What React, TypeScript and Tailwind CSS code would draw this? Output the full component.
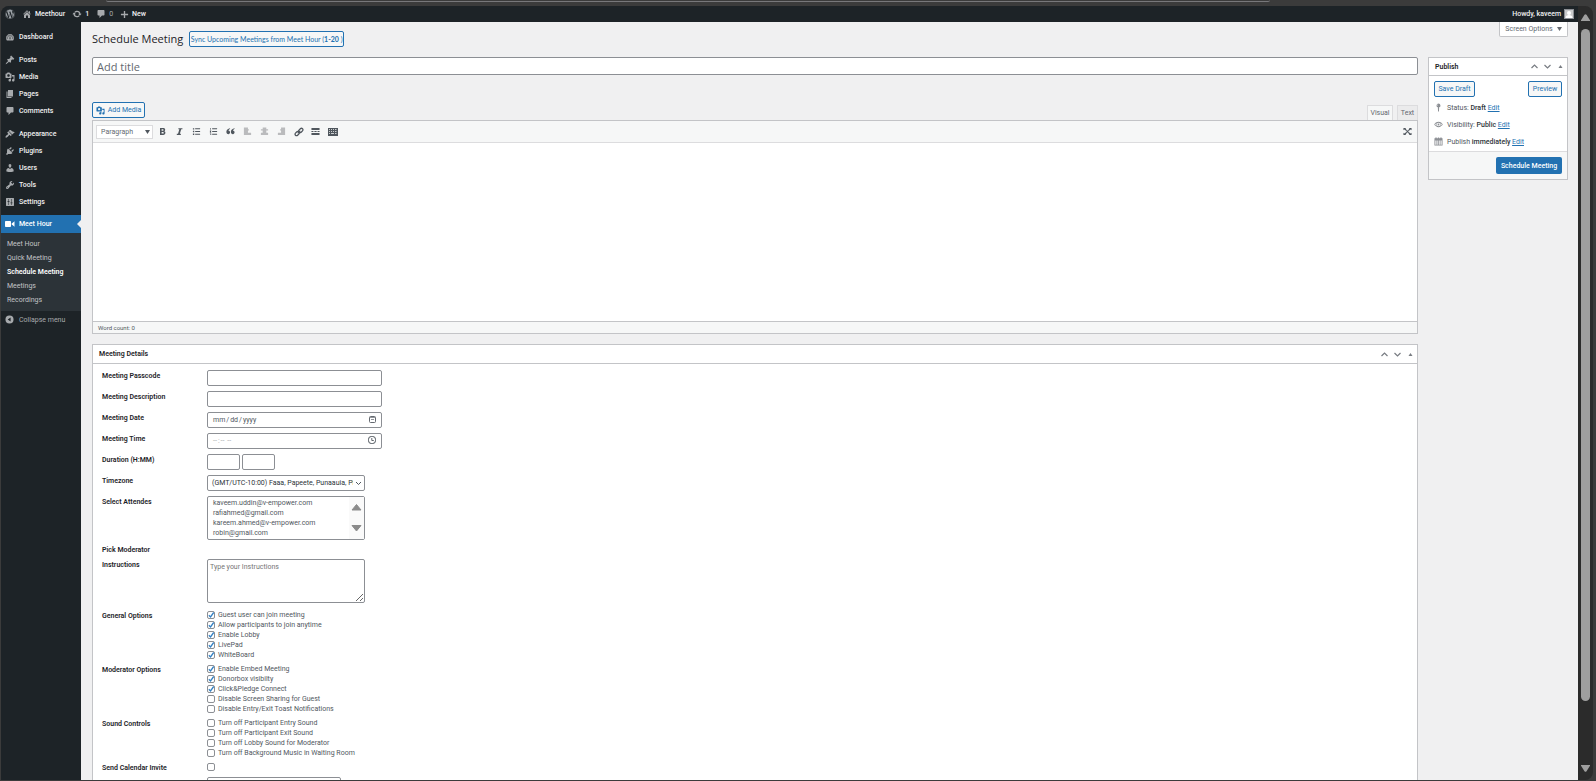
import React from "react";
import { FaWordpress } from "react-icons/fa6";

const paths = {
  home: "M16 8.5l1.53 1.53-1.06 1.06L10 4.6l-6.47 6.49-1.06-1.06L10 2.5l4 4v-2h2v4zm-6-2.46l6 5.99V18H12v-5H8v5H4v-5.97z",
  update:
    "M10.2 3.28c3.53 0 6.43 2.61 6.92 6h2.08l-3.5 4-3.5-4h2.32c-.45-1.97-2.21-3.45-4.32-3.45-1.45 0-2.73.71-3.54 1.78L4.95 5.66C6.23 4.2 8.11 3.28 10.2 3.28zm-.4 13.44c-3.52 0-6.43-2.61-6.92-6H.8l3.5-4c1.17 1.33 2.33 2.67 3.5 4H5.48c.45 1.97 2.21 3.45 4.32 3.45 1.45 0 2.73-.71 3.54-1.78l1.71 1.95c-1.28 1.46-3.15 2.38-5.25 2.38z",
  comments: "M5 2h10c1.1 0 2 .9 2 2v7c0 1.1-.9 2-2 2h-3l-5 5v-5H5c-1.1 0-2-.9-2-2V4c0-1.1.9-2 2-2z",
  plus: "M18 8.500v3h-6.500v6.500h-3v-6.500H2v-3h6.500V2h3v6.500z",
  dashboard:
    "M3.76 17h12.48A7.97 7.970 0 0 0 18 12c0-4.420-3.580-8-8-8s-8 3.580-8 8c0 1.890.660 3.630 1.760 5zM9 5.500h2v2H9zM5.200 7h2v2h-2zM12.800 7h2v2h-2zM3.500 11h2v2h-2zM14.500 11h2v2h-2zM9 14.500l.6-6h.8l.6 6z",
  posts:
    "M10.44 3.02l1.82-1.82 6.36 6.35-1.83 1.82c-1.05-.68-2.48-.57-3.41.36l-.75.75c-.92.93-1.04 2.35-.35 3.41l-1.83 1.82-2.41-2.41-2.8 2.79c-.42.42-3.38 2.71-3.8 2.29s1.86-3.39 2.28-3.81l2.79-2.79L4.1 9.36l1.83-1.82c1.05.69 2.48.57 3.4-.36l.75-.75c.93-.92 1.05-2.35.36-3.41z",
  media:
    "M13 11V4c0-.55-.45-1-1-1h-1.67L9 1H5L3.67 3H2c-.55 0-1 .45-1 1v7c0 .55.45 1 1 1h10c.55 0 1-.45 1-1zM7 4.5c1.38 0 2.5 1.12 2.5 2.5S8.38 9.5 7 9.5 4.5 8.38 4.5 7 5.62 4.5 7 4.5zM14 6h5v10.5c0 1.38-1.12 2.5-2.5 2.5S14 17.88 14 16.5s1.12-2.5 2.5-2.5c.17 0 .34.02.5.05V9h-3V6zm-4 8.05V13h2v3.5c0 1.38-1.12 2.5-2.5 2.5S7 17.88 7 16.5 8.12 14 9.5 14c.17 0 .34.02.5.05z",
  pages: "M6 15V2h10v13H6zm-1 1h8v2H3V5h2v11z",
  appearance:
    "M14.48 11.06L7.41 3.99l1.5-1.5c.5-.56 2.3-.47 3.51.32 1.21.8 1.43 1.28 2.91 2.1 1.18.64 2.45 1.26 4.45.85zm-.71.71L6.7 4.7 4.93 6.47c-.39.39-.39 1.02 0 1.41l1.06 1.06c.39.39.39 1.03 0 1.42-.6.6-1.43 1.11-2.21 1.69-.35.26-.7.53-1.01.84C1.43 14.23.4 16.08 1.4 17.07c.99 1 2.84-.03 4.18-1.36.31-.31.58-.66.85-1.02.57-.78 1.08-1.61 1.69-2.21.39-.39 1.02-.39 1.41 0l1.06 1.06c.39.39 1.02.39 1.41 0z",
  plugins:
    "M13.11 4.36L9.87 7.6 8 5.73l3.24-3.24c.35-.34 1.05-.2 1.56.32.52.51.66 1.21.31 1.55zm-8 1.77l.91-1.12 9.01 9.01-1.19.84c-.71.71-2.63 1.16-3.82 1.16H6.14L4.9 17.26c-.59.59-1.54.59-2.12 0-.59-.58-.59-1.53 0-2.12l1.24-1.24v-3.88c0-1.13.4-3.19 1.09-3.89zm7.26 3.97l3.24-3.24c.34-.35 1.04-.21 1.55.31.52.51.66 1.21.31 1.55l-3.24 3.25z",
  users:
    "M10 9.25c-2.27 0-2.73-3.44-2.73-3.44C7 4.02 7.82 2 9.97 2c2.16 0 2.98 2.02 2.71 3.81 0 0-.41 3.44-2.68 3.44zm0 2.57L12.72 10c2.39 0 4.52 2.33 4.52 4.53v2.49s-3.65 1.13-7.24 1.13c-3.65 0-7.24-1.13-7.24-1.13v-2.49c0-2.25 1.94-4.48 4.47-4.48z",
  tools:
    "M16.68 9.77c-1.34 1.34-3.3 1.67-4.95.99l-5.41 6.52c-.99.99-2.59.99-3.58 0s-.99-2.59 0-3.57l6.52-5.42c-.68-1.65-.35-3.61.99-4.95 1.28-1.28 3.12-1.62 4.72-1.06l-2.89 2.89 2.82 2.82 2.86-2.87c.53 1.58.18 3.39-1.08 4.65zM3.81 16.21c.4.39 1.04.39 1.43 0 .4-.4.4-1.04 0-1.43-.39-.4-1.03-.4-1.43 0-.39.39-.39 1.03 0 1.43z",
  settings:
    "M3 2h14c.6 0 1 .4 1 1v14c0 .6-.4 1-1 1H3c-.6 0-1-.4-1-1V3c0-.6.4-1 1-1zM6.500 4v4H5v1.500h1.500V16h1V9.500H9V8H7.500V4zM12.500 4v7H11v1.500h1.500V16h1v-3.500H15V11h-1.500V4z",
  video: "M12 14V6c0-1.1-.9-2-2-2H2C.9 4 0 4.900 0 6v8c0 1.100.9 2 2 2h8c1.100 0 2-.9 2-2zm1-3.300l6 4.800V4.500l-6 4.800v1.400z",
  collapse: "M10 1a9 9 0 1 0 0 18 9 9 0 0 0 0-18zM12.500 5.500v9L6 10z",
  bold: "M4.500 2h6.800c3 0 4.700 1.400 4.700 3.900 0 1.600-.8 2.700-2.100 3.300 1.700.5 2.600 1.800 2.600 3.700 0 2.900-1.900 4.600-5 4.600h-7zM8 5v3.300h2.500c1.300 0 2-.5 2-1.600S11.800 5 10.500 5zM8 11v3.700h2.800c1.400 0 2.200-.6 2.200-1.900S12.200 11 10.800 11z",
  italic: "M7.500 2.500H16.500V5h-2.700l-3 10H13v2.500H4V15h2.700l3-10H7.500z",
  ul: "M2 2.500h3v3H2zM7 3h11v2H7zM2 8.500h3v3H2zM7 9h11v2H7zM2 14.500h3v3H2zM7 15h11v2H7z",
  ol: "M3 2h1.500v4H3zM7 3h11v2H7zM2 8h3v1.500L3.500 11.500H5v1H2zM7 9h11v2H7zM2 14.500h3V18H2v-1h2v-.5H3v-1h1H2zM7 15h11v2H7z",
  quote: "M9 4.500C6.800 5.300 5.700 6.800 5.600 8.500c2 0 3.400 1.300 3.400 3.300S7.500 16 5.400 16C2.500 16 .8 13.700.8 10.700.8 7 4.200 4 9 3zM19 4.500c-2.200.8-3.300 2.300-3.400 4 2 0 3.400 1.300 3.400 3.300S17.500 16 15.400 16c-2.900 0-4.600-2.300-4.600-5.300C10.800 7 14.200 4 19 3z",
  left: "M2 1h9v4H2zM2 5h11v3H2zM2 8h9v5H2zM2 13h16v4.500H2z",
  center: "M6 1h8v4H6zM2 5h16v3H2zM6 8h8v5H6zM2 13h16v4.500H2z",
  right: "M9 1h9v4H9zM7 5h11v3H7zM9 8h9v5H9zM2 13h16v4.500H2z",
  more: "M1 2h18v4.500H1zM1 9h4.500v2H1zM7.500 9h5v2h-5zM14.500 9H19v2h-4.500zM1 13.500h18V18H1z",
  keyboard:
    "M0 2h20v16H0zM2 4.500v1.500h2V4.500zM6 4.500v1.500h2V4.500zM10 4.500v1.500h2V4.500zM14 4.500v1.500h3V4.500zM2 8.500V10h2V8.500zM6 8.500V10h2V8.500zM10 8.500V10h2V8.500zM14 8.500V10h3V8.500zM2 12.500V14h2v-1.500zM6 12.500V14h6v-1.500zM14 12.500V14h3v-1.500z",
  expand: "M1 2h6L5.500 3.500 9 7.500 7.500 9 3 5.500 1 7zM19 2v5l-2-1.500L12.500 9 11 7.500l3.500-4L13 2zM1 18v-5l2 1.500L7.500 11 9 12.500l-3.500 4L7 18zM19 18h-6l1.500-1.500-3.500-4 1.500-1.500 4.500 3.500 2-1.500zM8 8h4v4H8z",
  pin: "M10 1a4.500 4.500 0 0 0-1.500 8.700L9 19h2l.5-9.300A4.500 4.500 0 0 0 10 1zM9 3.500a2 2 0 0 0-2 2h1.200A1 1 0 0 1 9 4.500z",
  eye: "M10 4C5.500 4 2 7 .5 10.200 2.500 13.500 6 16 10 16s7.500-2.500 9.500-5.800C18 7 14.500 4 10 4zM10 6a4 4 0 1 1 0 8 4 4 0 0 1 0-8zM6 7a6 6 0 0 0 0 6.500C4.500 12.700 3.300 11.500 2.500 10.200 3.300 8.800 4.500 7.700 6 7zM14 7c1.500.7 2.700 1.800 3.500 3.200-.8 1.300-2 2.500-3.500 3.300A6 6 0 0 0 14 7zM10 8a2 2 0 1 0 0 4 2 2 0 0 0 0-4z",
  calendar: "M3 1h3v2h2.500V1h3v2H14V1h3v2h2v16H1V3h2zM3 7.500v9.500h2.500V7.500zM7.500 7.500v9.500h1.800V7.500zM11 7.500v9.500h1.700V7.500zM14.500 7.500v9.500H17V7.500z",
};
type IconName = keyof typeof paths;

function Icon({ name, className = "size-[10px]" }: { name: IconName; className?: string }) {
  return (
    <svg viewBox="0 0 20 20" fill="currentColor" fillRule="evenodd" aria-hidden="true" className={`shrink-0 ${className}`}>
      <path d={paths[name]} />
    </svg>
  );
}

const menu: { label: string; icon: IconName }[][] = [
  [{ label: "Dashboard", icon: "dashboard" }],
  [
    { label: "Posts", icon: "posts" },
    { label: "Media", icon: "media" },
    { label: "Pages", icon: "pages" },
    { label: "Comments", icon: "comments" },
  ],
  [
    { label: "Appearance", icon: "appearance" },
    { label: "Plugins", icon: "plugins" },
    { label: "Users", icon: "users" },
    { label: "Tools", icon: "tools" },
    { label: "Settings", icon: "settings" },
  ],
];

function AdminBar() {
  return (
    <header className="flex h-4 shrink-0 items-center justify-between bg-[#1d2327] px-1 font-medium text-[#f0f0f1]">
      <nav className="flex items-center gap-[7px]">
        <a href="#wp" aria-label="WordPress" className="text-[#9ca2a7]">
          <FaWordpress className="size-[10px]" />
        </a>
        <a href="#site" className="flex items-center gap-[3px]">
          <Icon name="home" className="size-[10px] text-[#a7aaad]" />
          Meethour
        </a>
        <a href="#updates" className="flex items-center gap-[3px]">
          <Icon name="update" className="size-[10px] text-[#a7aaad]" />1
        </a>
        <a href="#comments" className="flex items-center gap-[3px] font-normal text-[#a7aaad]">
          <Icon name="comments" />0
        </a>
        <a href="#new" className="flex items-center gap-[3px]">
          <Icon name="plus" className="size-[9px] text-[#a7aaad]" />
          New
        </a>
      </nav>
      <a href="#profile" className="flex items-center gap-[3px]">
        Howdy, kaveem
        <svg viewBox="0 0 10 10" className="size-[10px]" aria-hidden="true">
          <rect width="10" height="10" fill="#8c8f94" />
          <rect x="1" y="1" width="8" height="8" fill="#c9cacb" />
          <circle cx="5" cy="4" r="2" fill="#fff" />
          <path d="M1.500 9C1.500 7 3 6 5 6s3.500 1 3.500 3z" fill="#fff" />
        </svg>
      </a>
    </header>
  );
}

function Sidebar() {
  const sub = ["Meet Hour", "Quick Meeting", "Schedule Meeting", "Meetings", "Recordings"];
  return (
    <nav className="w-20 shrink-0 bg-[#1d2327] pt-[6px] text-[#f0f0f1]">
      {menu.map((group, i) => (
        <ul key={i} className="mb-[6px] font-medium last-of-type:mb-[5px] nth-[3]:mb-[5px]">
          {group.map((m) => (
            <li key={m.label}>
              <a href={"#" + m.label.toLowerCase()} className="flex h-[17px] items-center gap-1 pl-1">
                <Icon name={m.icon} className="size-[10px] text-[#a7aaad]" />
                {m.label}
              </a>
            </li>
          ))}
        </ul>
      ))}
      <a href="#meet-hour" className="relative flex h-[18px] items-center gap-1 bg-[#2271b1] pl-1 font-medium text-white">
        <Icon name="video" />
        Meet Hour
        <svg viewBox="0 0 4 8" className="absolute top-[5px] right-0 h-2 w-1" aria-hidden="true">
          <path d="M4 0v8L0 4z" fill="#f0f0f1" />
        </svg>
      </a>
      <ul className="bg-[#2c3338] pt-1 pb-1 text-[#c3c4c7]">
        {sub.map((s) => (
          <li key={s}>
            <a
              href={"#sub-" + s.toLowerCase().replace(" ", "-")}
              className={s === "Schedule Meeting" ? "flex h-[14px] items-center pl-[6px] font-semibold text-white" : "flex h-[14px] items-center pl-[6px]"}
            >
              {s}
            </a>
          </li>
        ))}
      </ul>
      <button type="button" className="flex h-[17px] items-center gap-[5px] pl-1 text-[#a7aaad]">
        <Icon name="collapse" className="size-[9px]" />
        Collapse menu
      </button>
    </nav>
  );
}

function BoxHandles() {
  return (
    <span className="flex items-center gap-1 text-[#787c82]">
      <button type="button" aria-label="Move up" className="grid size-[9px] place-items-center">
        <svg viewBox="0 0 9 9" className="size-[9px]" fill="none" stroke="currentColor" strokeWidth="1.200">
          <path d="M1.500 6l3-3 3 3" />
        </svg>
      </button>
      <button type="button" aria-label="Move down" className="grid size-[9px] place-items-center">
        <svg viewBox="0 0 9 9" className="size-[9px]" fill="none" stroke="currentColor" strokeWidth="1.200">
          <path d="M1.500 3l3 3 3-3" />
        </svg>
      </button>
      <button type="button" aria-label="Toggle panel" className="grid size-[9px] place-items-center">
        <svg viewBox="0 0 9 9" className="size-[9px]" fill="currentColor">
          <path d="M2.500 6l2-3 2 3z" />
        </svg>
      </button>
    </span>
  );
}

const outlineButton =
  "flex h-4 items-center justify-center whitespace-nowrap rounded-[2px] border border-[#2271b1] bg-[#f6f7f7] text-[#2271b1]";

function Editor() {
  const tools: { label: string; icon: IconName; dim?: boolean }[] = [
    { label: "Bold", icon: "bold" },
    { label: "Italic", icon: "italic" },
    { label: "Bulleted list", icon: "ul" },
    { label: "Numbered list", icon: "ol" },
    { label: "Blockquote", icon: "quote" },
    { label: "Align left", icon: "left", dim: true },
    { label: "Align center", icon: "center", dim: true },
    { label: "Align right", icon: "right", dim: true },
  ];
  return (
    <section>
      <div className="flex items-end justify-between">
        <button type="button" className={`${outlineButton} mb-[2px] w-[53px] gap-[3px]`}>
          <Icon name="media" className="size-[9px]" />
          Add Media
        </button>
        <div className="flex gap-1 text-[#646970]">
          <button type="button" className="h-[15px] w-[26px] border border-b-0 border-[#dcdcde] bg-[#f6f7f7]">Visual</button>
          <button type="button" className="h-[15px] w-[21px] border border-b-0 border-[#dcdcde] bg-[#ebebec]">Text</button>
        </div>
      </div>
      <div className="border border-[#c3c4c7] bg-white">
        <div className="flex h-[22px] items-center border-b border-[#dcdcde] bg-[#f6f7f7] pr-[5px] pl-[3px]">
          <div className="relative mr-[1px]">
            <select aria-label="Text style" className="block h-[14px] w-[57px] appearance-none border border-[#dcdcde] bg-white pl-1 text-[#646970]">
              <option>Paragraph</option>
            </select>
            <svg viewBox="0 0 5 4" className="pointer-events-none absolute top-[5px] right-[3px] h-1 w-[5px]" fill="#50575e">
              <path d="M0 0h5L2.500 4z" />
            </svg>
          </div>
          {tools.map((t) => (
            <button
              key={t.label}
              type="button"
              aria-label={t.label}
              className={t.dim ? "grid w-[17px] place-items-center text-[#babbbd]" : "grid w-[17px] place-items-center text-[#50575e]"}
            >
              <Icon name={t.icon} className="size-[9px]" />
            </button>
          ))}
          <button type="button" aria-label="Insert link" className="grid w-[17px] place-items-center text-[#50575e]">
            <svg viewBox="0 0 20 20" className="size-[10px]" fill="none" stroke="currentColor" strokeWidth="2.600">
              <rect x="8.500" y="4" width="10" height="6" rx="3" transform="rotate(-45 13.500 7)" />
              <rect x="1.500" y="10" width="10" height="6" rx="3" transform="rotate(-45 6.500 13)" />
              <path d="M7.500 12.500l5-5" />
            </svg>
          </button>
          <button type="button" aria-label="Read more" className="grid w-[17px] place-items-center text-[#50575e]">
            <Icon name="more" className="size-[9px]" />
          </button>
          <button type="button" aria-label="Toolbar toggle" className="grid w-[17px] place-items-center text-[#50575e]">
            <Icon name="keyboard" />
          </button>
          <button type="button" aria-label="Fullscreen" className="ml-auto text-[#50575e]">
            <Icon name="expand" className="size-[9px]" />
          </button>
        </div>
        <textarea aria-label="Content" className="block h-[178px] w-full resize-none outline-none" />
        <div className="flex h-3 items-center border-t border-[#c3c4c7] bg-[#f6f7f7] pl-[5px] text-[6px] text-[#50575e]">Word count: 0</div>
      </div>
    </section>
  );
}

const field = "h-4 rounded-[2px] border border-[#8c8f94] bg-white px-1";
const pickerField =
  "[&::-webkit-calendar-picker-indicator]:size-2 [&::-webkit-calendar-picker-indicator]:p-0 [&::-webkit-calendar-picker-indicator]:opacity-0 [&::-webkit-datetime-edit]:p-0";
const labelCls = "font-semibold leading-3 text-[#1d2327]";

function Row({ label, id, children, className = "h-[21px]" }: { label: string; id?: string; children?: React.ReactNode; className?: string }) {
  return (
    <div className={`grid grid-cols-[105px_1fr] items-start ${className}`}>
      {id ? (
        <label htmlFor={id} className={labelCls}>{label}</label>
      ) : (
        <span className={labelCls}>{label}</span>
      )}
      <div>{children}</div>
    </div>
  );
}

function Check({ label, checked = false, hidden = false }: { label: string; checked?: boolean; hidden?: boolean }) {
  return (
    <label className="flex h-[10px] w-fit items-center gap-[3px] text-[#50575e]">
      <span className="relative grid size-2">
        <input
          type="checkbox"
          defaultChecked={checked}
          aria-label={hidden ? label : undefined}
          className="peer size-2 appearance-none rounded-[2px] border border-[#8c8f94] bg-white"
        />
        <svg viewBox="0 0 8 8" className="pointer-events-none invisible absolute inset-0 size-2 peer-checked:visible" fill="none" stroke="#3582c4" strokeWidth="1.300">
          <path d="M1.800 4.200l1.700 1.700L6.700 1.500" />
        </svg>
      </span>
      {!hidden && label}
    </label>
  );
}

function MeetingDetails() {
  const general = ["Guest user can join meeting", "Allow participants to join anytime", "Enable Lobby", "LivePad", "WhiteBoard"];
  const moderator = ["Enable Embed Meeting", "Donorbox visibilty", "Click&Pledge Connect", "Disable Screen Sharing for Guest", "Disable Entry/Exit Toast Notifications"];
  const sound = [
    "Turn off Participant Entry Sound",
    "Turn off Participant Exit Sound",
    "Turn off Lobby Sound for Moderator",
    "Turn off Background Music in Waiting Room",
  ];
  return (
    <section className="mt-[10px] border border-[#c3c4c7] bg-white">
      <div className="flex h-[19px] items-center justify-between border-b border-[#c3c4c7] pr-[2px] pl-[6px]">
        <h2 className="font-semibold text-[#1d2327]">Meeting Details</h2>
        <BoxHandles />
      </div>
      <form className="pt-[6px] pl-[9px]">
        <Row label="Meeting Passcode" id="passcode"><input id="passcode" className={`${field} block w-[175px]`} /></Row>
        <Row label="Meeting Description" id="description"><input id="description" className={`${field} block w-[175px]`} /></Row>
        <Row label="Meeting Date" id="date">
          <div className="relative w-[175px]">
            <input id="date" type="date" className={`${field} ${pickerField} block w-full text-[#50575e]`} />
            <svg viewBox="0 0 7 7" className="pointer-events-none absolute top-1 right-[6px] size-[7px]" fill="none" stroke="#646970">
              <rect x=".5" y=".5" width="6" height="6" rx="1" />
              <path d="M1 1.500h5" strokeOpacity=".7" />
              <path d="M2 3.500h3" strokeOpacity=".7" />
            </svg>
          </div>
        </Row>
        <Row label="Meeting Time" id="time">
          <div className="relative w-[175px]">
            <input id="time" type="time" className={`${field} ${pickerField} block w-full text-[#a7aaad]`} />
            <svg viewBox="0 0 8 8" className="pointer-events-none absolute top-[3px] right-[6px] size-2" fill="none" stroke="#50575e">
              <rect x=".5" y=".5" width="7" height="7" rx="2.800" />
              <path d="M3.800 2v2.500h2" strokeWidth=".9" />
            </svg>
          </div>
        </Row>
        <Row label="Duration (H:MM)" id="hours">
          <div className="flex gap-[2px]">
            <input id="hours" className={`${field} w-[33px]`} />
            <input aria-label="Minutes" className={`${field} w-[33px]`} />
          </div>
        </Row>
        <Row label="Timezone" id="timezone">
          <div className="relative w-[158px]">
            <select id="timezone" className={`${field} block w-full appearance-none pr-[11px] text-[#2c3338]`}>
              <option>(GMT/UTC-10:00) Faaa, Papeete, Punaauia, Pirae</option>
            </select>
            <svg viewBox="0 0 7 5" className="pointer-events-none absolute top-[6px] right-[3px] h-[5px] w-[7px]" fill="none" stroke="#50575e">
              <path d="M1 1l2.500 2.500L6 1" />
            </svg>
          </div>
        </Row>
        <Row label="Select Attendes" id="attendees" className="h-12">
          <div className="relative w-[158px]">
            <select
              id="attendees"
              multiple
              className="block h-[44px] w-full appearance-none overflow-hidden rounded-[2px] border border-[#8c8f94] bg-white px-[5px] py-[2px] text-[#50575e] [&>option]:h-[10px] [&>option]:min-h-0 [&>option]:px-0 [&>option]:leading-[10px]"
            >
              <option>kaveem.uddin@v-empower.com</option>
              <option>rafiahmed@gmail.com</option>
              <option>kareem.ahmed@v-empower.com</option>
              <option>robin@gmail.com</option>
            </select>
            <svg viewBox="0 0 15 42" className="pointer-events-none absolute top-[1px] right-[1px] h-[42px] w-[15px]">
              <rect width="15" height="42" fill="#fafafa" />
              <path d="M3 13h9L7.500 7.500z M3 28.500h9L7.500 34z" fill="#8b8b8b" stroke="#8b8b8b" strokeLinejoin="round" />
            </svg>
          </div>
        </Row>
        <Row label="Pick Moderator" className="h-[15px]" />
        <Row label="Instructions" id="instructions" className="h-[51px]">
          <textarea
            id="instructions"
            placeholder="Type your Instructions"
            className="block h-[44px] w-[158px] rounded-[2px] border border-[#8c8f94] px-[2px] py-[2px] leading-[10px] placeholder:text-[#757575]"
          />
        </Row>
        <Row label="General Options" className="h-[54px]">{general.map((g) => <Check key={g} label={g} checked />)}</Row>
        <Row label="Moderator Options" className="h-[54px]">{moderator.map((m, i) => <Check key={m} label={m} checked={i < 3} />)}</Row>
        <Row label="Sound Controls" className="h-[44px]">{sound.map((s) => <Check key={s} label={s} />)}</Row>
        <Row label="Send Calendar Invite" className="h-[15px]"><Check label="Send Calendar Invite" hidden /></Row>
        <div className="pl-[105px]">
          <input aria-label="Calendar recipients" className={`${field} block w-[134px]`} />
        </div>
      </form>
    </section>
  );
}

function Publish() {
  const rows: { icon: IconName; label: string; value: string }[] = [
    { icon: "pin", label: "Status: ", value: "Draft" },
    { icon: "eye", label: "Visibility: ", value: "Public" },
    { icon: "calendar", label: "Publish ", value: "immediately" },
  ];
  return (
    <aside className="w-[140px] shrink-0 self-start border border-[#c3c4c7] bg-white">
      <div className="flex h-[18px] items-center justify-between border-b border-[#c3c4c7] pr-[2px] pl-[6px]">
        <h2 className="font-semibold text-[#1d2327]">Publish</h2>
        <BoxHandles />
      </div>
      <div className="flex justify-between px-[5px] pt-[5px] pb-[2px]">
        <button type="button" className={`${outlineButton} w-[41px]`}>Save Draft</button>
        <button type="button" className={`${outlineButton} w-[34px]`}>Preview</button>
      </div>
      {rows.map((r) => (
        <div key={r.icon} className="flex h-[17px] items-center gap-1 pl-[5px] text-[#50575e]">
          <Icon name={r.icon} className="size-[9px] text-[#8c8f94]" />
          <span>
            {r.label}
            <span className="font-medium text-[#2c3338]">{r.value}</span>{" "}
            <a href={"#edit-" + r.icon} className="text-[#2271b1] underline">Edit</a>
          </span>
        </div>
      ))}
      <div className="mt-[1px] flex justify-end border-t border-[#dcdcde] bg-[#f6f7f7] px-[5px] py-[5px]">
        <button type="button" className="h-[17px] w-[66px] rounded-[2px] bg-[#2271b1] font-medium text-white">Schedule Meeting</button>
      </div>
    </aside>
  );
}

export default function App() {
  return (
    <div className="flex h-screen flex-col overflow-hidden bg-[#3b3b3b] pb-px pl-px font-['Roboto','Noto_Sans',sans-serif] text-[7px] leading-[10px]">
      <div className="h-[6px] shrink-0 pr-[326px] pl-[105px]">
        <div className="h-[2px] rounded-b-lg border-b border-[#77777a]" />
      </div>
      <div className="mr-[3px] flex min-h-0 flex-1 overflow-hidden rounded-t-lg rounded-br-lg bg-[#2b2b2b]">
        <div className="flex min-w-0 flex-1 flex-col">
          <AdminBar />
          <div className="flex min-h-0 flex-1">
            <Sidebar />
            <main className="min-w-0 flex-1 overflow-hidden bg-[#f0f0f1] pr-[10px] pl-[11px]">
              <div className="flex h-[35px] items-start justify-between">
                <div className="flex items-center gap-[6px] pt-[9px]">
                  <h1 className="font-['Open_Sans','Noto_Sans',sans-serif] text-[11px] leading-4 text-[#1d2327]">Schedule Meeting</h1>
                  <button type="button" className={`${outlineButton} w-[155px] font-['Lato','Roboto',sans-serif]`}>
                    <span>
                      Sync Upcoming Meetings from Meet Hour (<b>1-20</b> )
                    </span>
                  </button>
                </div>
                <button type="button" className="flex h-[15px] w-[69px] items-center justify-center gap-1 rounded-b-[2px] border border-t-0 border-[#c3c4c7] bg-white text-[#646970]">
                  Screen Options
                  <svg viewBox="0 0 5 4" className="h-1 w-[5px]" fill="currentColor"><path d="M0 0h5L2.500 4z" /></svg>
                </button>
              </div>
              <div className="flex gap-[10px]">
                <div className="min-w-0 flex-1">
                  <input
                    aria-label="Add title"
                    placeholder="Add title"
                    className="mb-[27px] block h-[18px] w-full rounded-[2px] border border-[#8c8f94] bg-white px-1 font-['Open_Sans','Noto_Sans',sans-serif] text-[11px] placeholder:text-[#646970]"
                  />
                  <Editor />
                  <MeetingDetails />
                </div>
                <Publish />
              </div>
            </main>
          </div>
        </div>
        <div className="flex w-[15px] shrink-0 flex-col items-center pt-2 pb-2" aria-hidden="true">
          <svg viewBox="0 0 9 7" className="h-[7px] w-[9px] shrink-0" fill="#9f9f9f"><path d="M3.500.8Q4.500-.5 5.500.8L9 6.200V7H0v-.8z" /></svg>
          <div className="mt-2 h-[672px] w-[9px] rounded-full bg-[#9f9f9f]" />
          <svg viewBox="0 0 9 7" className="mt-auto h-[7px] w-[9px] shrink-0" fill="#9f9f9f"><path d="M3.500 6.200q1 1.300 2 0L9 .8V0H0v.8z" /></svg>
        </div>
      </div>
    </div>
  );
}
